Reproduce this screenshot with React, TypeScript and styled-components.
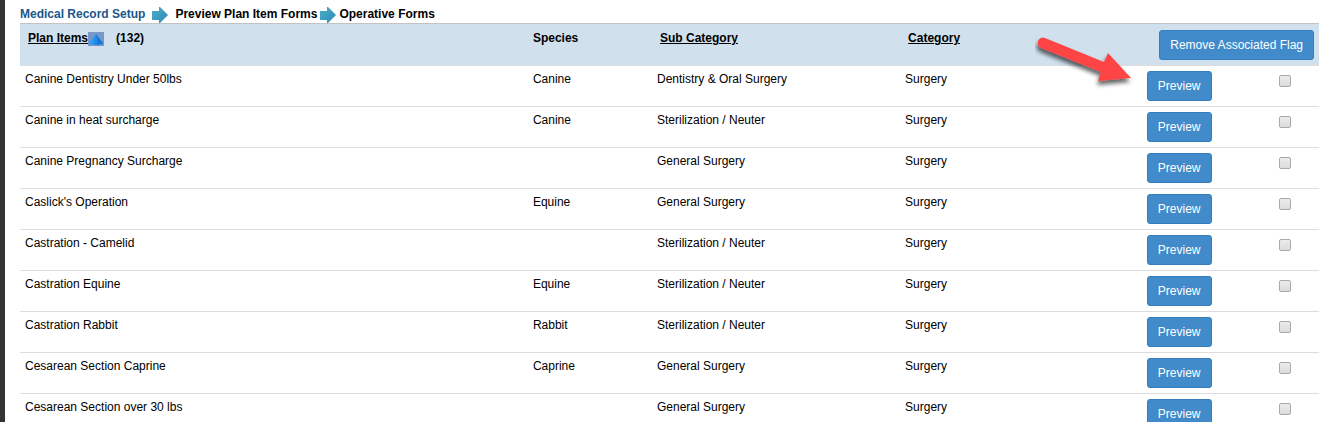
import React from "react";
import styled, { createGlobalStyle } from "styled-components";

const GlobalStyle = createGlobalStyle`
  *, *::before, *::after { box-sizing: border-box; }
  body {
    margin: 0;
    background: #fff;
    color: #000;
    font: 12px/18px "Liberation Sans", Arial, sans-serif;
    overflow: hidden;
  }
`;

const Page = styled.div`
  position: relative;
  height: 100vh;
  overflow: hidden;
  border-left: 5px solid #333;
  padding: 5px 2px 0 15px;
`;

const Breadcrumb = styled.nav`
  display: flex;
  align-items: center;
  height: 18px;
  font-weight: bold;
`;

const CrumbLink = styled.a`
  color: #19568b;
  text-decoration: none;
`;

const StepArrow = styled.svg<{ $gap: number }>`
  flex: none;
  width: 16px;
  height: 16px;
  margin: 2px ${(p) => p.$gap}px 0;
`;

const Table = styled.table`
  width: 100%;
  table-layout: fixed;
  border-collapse: separate;
  border-spacing: 0;
`;

const Col = styled.col<{ $width: string }>`
  width: ${(p) => p.$width};
`;

const HeadCell = styled.th<{ $indent?: number; $align?: "left" | "right" }>`
  height: 42px;
  padding: 5px 5px 5px ${(p) => p.$indent ?? 8}px;
  border-top: 1px solid #c3c3c3;
  background: #d1e0ed;
  text-align: ${(p) => p.$align ?? "left"};
  vertical-align: top;
  white-space: nowrap;
`;

const HeadLine = styled.div`
  display: flex;
  align-items: center;
`;

const SortLink = styled.a`
  color: #000;
  text-decoration: underline;
`;

const SortIcon = styled.svg`
  width: 16px;
  height: 14px;
  margin: 2px 12px 0 0;
`;

const Cell = styled.td<{ $align?: "left" | "center" }>`
  height: 41px;
  padding: 4px 5px 5px;
  border-top: 1px solid #ddd;
  text-align: ${(p) => p.$align ?? "left"};
  vertical-align: top;
  white-space: nowrap;
`;

const Button = styled.button`
  display: inline-block;
  min-width: 65px;
  height: 30px;
  margin-top: 1px;
  padding: 5px 10px;
  border: 1px solid #357ebd;
  border-radius: 3px;
  background: #428bca;
  color: #fff;
  font: 12px/18px "Liberation Sans", Arial, sans-serif;
  white-space: nowrap;
  vertical-align: top;
`;

const Checkbox = styled.input`
  appearance: none;
  display: inline-block;
  width: 12px;
  height: 12px;
  margin: 5px 0 0;
  border: 1px solid #a9a9a9;
  border-radius: 2px;
  background: linear-gradient(#ececec, #dcdcdc);
  vertical-align: top;
  &:checked { background: #428bca; }
`;

const Pointer = styled.svg`
  position: absolute;
  top: 30px;
  right: 180px;
  width: 106px;
  height: 62px;
  pointer-events: none;
`;

const items = [
  ["Canine Dentistry Under 50lbs", "Canine", "Dentistry & Oral Surgery"],
  ["Canine in heat surcharge", "Canine", "Sterilization / Neuter"],
  ["Canine Pregnancy Surcharge", "", "General Surgery"],
  ["Caslick's Operation", "Equine", "General Surgery"],
  ["Castration - Camelid", "", "Sterilization / Neuter"],
  ["Castration Equine", "Equine", "Sterilization / Neuter"],
  ["Castration Rabbit", "Rabbit", "Sterilization / Neuter"],
  ["Cesarean Section Caprine", "Caprine", "General Surgery"],
  ["Cesarean Section over 30 lbs", "", "General Surgery"],
];

function Step({ gap }: { gap: number }) {
  return (
    <StepArrow $gap={gap} viewBox="0 0 16 16" aria-hidden="true">
      <defs>
        <linearGradient id="step" x1="0" x2="1" y1="0" y2="1">
          <stop offset="0" stopColor="#55adc8" />
          <stop offset="0.5" stopColor="#3c9cc0" />
          <stop offset="1" stopColor="#3189b2" />
        </linearGradient>
      </defs>
      <path d="M0 4h7V0h1l8 8-8 8H7v-3H0Z" fill="url(#step)" />
    </StepArrow>
  );
}

export default function App() {
  return (
    <>
      <GlobalStyle />
      <Page>
        <Breadcrumb aria-label="Breadcrumb">
          <CrumbLink href="#setup">Medical Record Setup</CrumbLink>
          <Step gap={7} />
          <span>Preview Plan Item Forms</span>
          <Step gap={3} />
          <span>Operative Forms</span>
        </Breadcrumb>
        <Table>
          <colgroup>
            <Col $width="39.1%" />
            <Col $width="9.55%" />
            <Col $width="19.1%" />
            <Col $width="18.6%" />
            <Col $width="8.4%" />
            <Col $width="5.25%" />
          </colgroup>
          <thead>
            <tr>
              <HeadCell scope="col">
                <HeadLine>
                  <SortLink href="#plan-items">Plan Items</SortLink>
                  <SortIcon viewBox="0 0 16 14" aria-hidden="true">
                    <rect width="16" height="14" fill="#7896c8" />
                    <path d="M8 2 1 11v1l8 1Z" fill="#2c9df2" />
                    <path d="m8 2 7 9v1l-6 1Z" fill="#1478dc" />
                    <path d="M8 2 5 12l4 1Z" fill="#1c8ae8" />
                  </SortIcon>
                  <span>(132)</span>
                </HeadLine>
              </HeadCell>
              <HeadCell scope="col" $indent={5}>Species</HeadCell>
              <HeadCell scope="col"><SortLink href="#sub-category">Sub Category</SortLink></HeadCell>
              <HeadCell scope="col"><SortLink href="#category">Category</SortLink></HeadCell>
              <HeadCell colSpan={2} $align="right">
                <Button type="button">Remove Associated Flag</Button>
              </HeadCell>
            </tr>
          </thead>
          <tbody>
            {items.map(([name, species, sub]) => (
              <tr key={name}>
                <Cell>{name}</Cell>
                <Cell>{species}</Cell>
                <Cell>{sub}</Cell>
                <Cell>Surgery</Cell>
                <Cell><Button type="button">Preview</Button></Cell>
                <Cell $align="center">
                  <Checkbox type="checkbox" aria-label={`Flag ${name}`} />
                </Cell>
              </tr>
            ))}
          </tbody>
        </Table>
        <Pointer viewBox="0 0 106 62" aria-hidden="true">
          <defs>
            <filter id="shadow" x="-20%" y="-20%" width="140%" height="150%">
              <feDropShadow dx="-1" dy="4" stdDeviation="2" floodColor="#000" floodOpacity="0.6" />
            </filter>
          </defs>
          <path
            d="M10 8 69 32 73 23 96 48 63 51 66 42 6 18A5 5 0 0 1 10 8Z"
            fill="#fd4444"
            filter="url(#shadow)"
          />
        </Pointer>
      </Page>
    </>
  );
}
